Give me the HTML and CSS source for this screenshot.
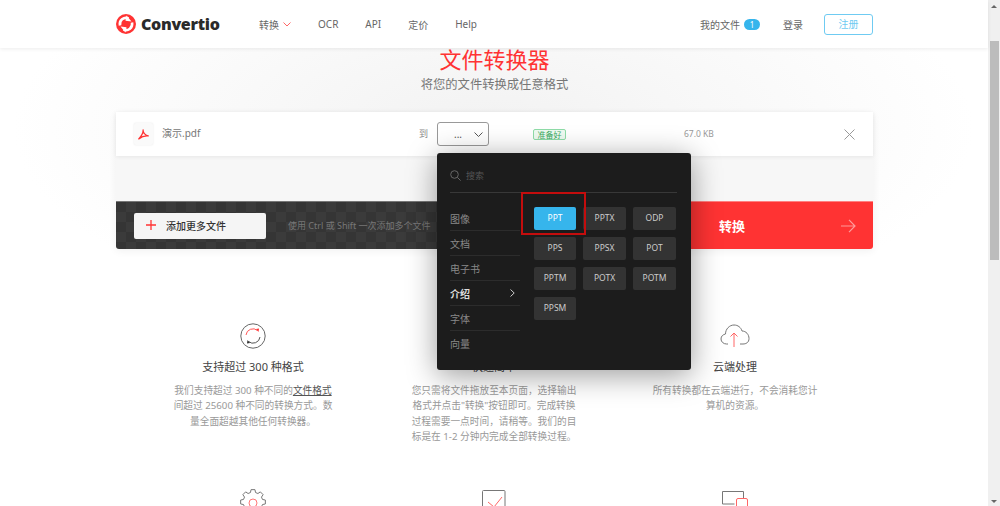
FILE: index.html
```html
<!DOCTYPE html>
<html lang="zh-CN">
 <head>
  <meta charset="UTF-8">
  <title>Convertio</title>
  <link rel="stylesheet" href="styles.css">
 </head>
 <body>
  <div class="app">
   <div class="main">
    <header class="topbar">
     <a class="logo">
      <svg class="logo-mark" width="20" height="20" viewBox="0 0 20 20">
       <circle cx="10" cy="10" r="10" fill="#f33"/>
       <path d="M4 11.500 A6.200 6.200 0 0 1 12.500 4.400" fill="none" stroke="#fff" stroke-width="2.600"/>
       <path d="M16 8.500 A6.200 6.200 0 0 1 7.500 15.600" fill="none" stroke="#fff" stroke-width="2.600"/>
       <path d="M9.500 6.800 L10.500 1.500 L15.500 7.500 Z" fill="#fff"/>
       <path d="M10.500 13.200 L9.500 18.500 L4.500 12.500 Z" fill="#fff"/>
      </svg>
      Convertio
     </a>
     <nav class="nav">
      <a class="nav-item">转换
       <svg width="8" height="5" viewBox="0 0 8 5"><path d="M.5.5 4 4 7.500.5" fill="none" stroke="#f66"/></svg>
      </a>
      <a class="nav-item">OCR</a>
      <a class="nav-item">API</a>
      <a class="nav-item">定价</a>
      <a class="nav-item">Help</a>
     </nav>
     <div class="account">
      <a class="nav-item">我的文件 <span class="badge">1</span></a>
      <a class="nav-item login">登录</a>
      <a class="signup">注册</a>
     </div>
    </header>

    <section class="hero">
     <h1>文件转换器</h1>
     <p class="subtitle">将您的文件转换成任意格式</p>

     <div class="converter">
      <div class="file-row">
       <span class="file-icon">
        <svg width="11" height="11" viewBox="0 0 12 12"><path d="M5.600 1C5.800 4.500 3.600 8 .8 10.800 3.600 8.600 8 7.200 11.200 7.600 8.600 7 5.200 4.400 5.600 1Z" fill="none" stroke="#f33" stroke-width="1.400" stroke-linejoin="round"/></svg>
       </span>
       <span class="file-name">演示.pdf</span>
       <span class="to-label">到</span>
       <span class="select">...
        <svg width="9" height="5" viewBox="0 0 9 5"><path d="M.5.5 4.500 4.500 8.500.5" fill="none" stroke="#555"/></svg>
       </span>
       <span class="status">准备好</span>
       <span class="file-size">67.0 KB</span>
       <svg class="close" width="11" height="11" viewBox="0 0 11 11"><path d="M.5.5 10.500 10.500M10.500.5.5 10.500" stroke="#999"/></svg>
      </div>
      <div class="gap-row"></div>
      <div class="action-row">
       <div class="action-left">
        <a class="add-btn">
         <svg width="10" height="10" viewBox="0 0 10 10"><path d="M5 0V10M0 5H10" stroke="#f33" stroke-width="1.300"/></svg>
         添加更多文件
        </a>
        <span class="hint">使用 Ctrl 或 Shift 一次添加多个文件</span>
       </div>
       <a class="convert-btn">
        <span>转换</span>
        <svg width="15" height="14" viewBox="0 0 15 14"><path d="M0 7H14M8 .8 14 7 8 13.200" fill="none" stroke="#ff9a9a" stroke-width="1.200"/></svg>
       </a>
      </div>

      <div class="dropdown">
       <div class="search">
        <svg width="11" height="11" viewBox="0 0 11 11"><circle cx="4.500" cy="4.500" r="3.800" fill="none" stroke="#666"/><path d="M7.300 7.300 10.600 10.600" stroke="#666"/></svg>
        <span>搜索</span>
       </div>
       <div class="dropdown-body">
        <ul class="cats">
         <li>图像</li>
         <li>文档</li>
         <li>电子书</li>
         <li class="active">介绍
          <svg width="5" height="8" viewBox="0 0 5 8"><path d="M.5.5 4.200 4 .5 7.500" fill="none" stroke="#ccc"/></svg>
         </li>
         <li>字体</li>
         <li>向量</li>
        </ul>
        <div class="formats">
         <a class="fmt selected">PPT</a>
         <a class="fmt">PPTX</a>
         <a class="fmt">ODP</a>
         <a class="fmt">PPS</a>
         <a class="fmt">PPSX</a>
         <a class="fmt">POT</a>
         <a class="fmt">PPTM</a>
         <a class="fmt">POTX</a>
         <a class="fmt">POTM</a>
         <a class="fmt">PPSM</a>
        </div>
       </div>
       <div class="callout"></div>
      </div>
     </div>
    </section>

    <section class="features">
     <div class="feature">
      <svg class="feature-icon" width="26" height="26" viewBox="0 0 26 26">
       <circle cx="13" cy="13" r="12.200" fill="none" stroke="#666"/>
       <path d="M6 12A7 7 0 0 1 17.500 7.500" fill="none" stroke="#f55"/>
       <path d="M20 14A7 7 0 0 1 8.500 18.500" fill="none" stroke="#555"/>
       <path d="M16 6 19 5.500 18.500 9Z" fill="#f33"/>
       <path d="M10 20 7 20.500 7.500 17Z" fill="#333"/>
      </svg>
      <h3>支持超过 300 种格式</h3>
      <p>我们支持超过 300 种不同的<u>文件格式</u><br>间超过 25600 种不同的转换方式。数<br>量全面超越其他任何转换器。</p>
     </div>
     <div class="feature">
      <svg class="feature-icon" width="26" height="26" viewBox="0 0 26 26">
       <path d="M13 4V22M4 13H22" stroke="#888"/>
      </svg>
      <h3>快速简单</h3>
      <p>您只需将文件拖放至本页面，选择输出<br>格式并点击"转换"按钮即可。完成转换<br>过程需要一点时间，请稍等。我们的目<br>标是在 1-2 分钟内完成全部转换过程。</p>
     </div>
     <div class="feature">
      <svg class="feature-icon" width="30" height="26" viewBox="0 0 30 26">
       <path d="M8 21H6.500C3.500 21 1 18.800 1 16S3 11.500 5.500 11C5.500 6 9.500 2 14 2 18 2 21 4.500 22 8 26 8 29 11.500 29 15.500S26 21 23 21H20" fill="none" stroke="#777"/>
       <path d="M14 24V10M10.500 13.500 14 10 17.500 13.500" fill="none" stroke="#f66"/>
      </svg>
      <h3>云端处理</h3>
      <p>所有转换都在云端进行，不会消耗您计<br>算机的资源。</p>
     </div>
     <div class="feature">
      <svg class="feature-icon" width="26" height="26" viewBox="0 0 26 26">
       <path d="M10.460 3.530 11.040.65H14.960L15.540 3.530 17.900 4.510 20.350 2.890 23.110 5.650 21.490 8.100 22.470 10.460 25.350 11.040V14.960L22.470 15.540 21.490 17.900 23.110 20.350 20.350 23.110 17.900 21.490 15.540 22.470 14.960 25.350H11.040L10.460 22.470 8.100 21.490 5.650 23.110 2.890 20.350 4.510 17.900 3.530 15.540.65 14.960V11.040L3.530 10.460 4.510 8.100 2.890 5.650 5.650 2.890 8.100 4.510Z" fill="none" stroke="#777" stroke-linejoin="round"/>
       <circle cx="13" cy="14" r="4" fill="none" stroke="#f77"/>
      </svg>
     </div>
     <div class="feature">
      <svg class="feature-icon" width="24" height="26" viewBox="0 0 24 26">
       <path d="M.5 24V2.500Q.5 1.500 1.500 1.500H22Q23 1.500 23 2.500V24" fill="none" stroke="#777"/>
       <path d="M6 13 12 18 20 8" fill="none" stroke="#f66"/>
      </svg>
     </div>
     <div class="feature">
      <svg class="feature-icon" width="26" height="26" viewBox="0 0 26 26">
       <path d="M12.500 15H.5V2.500H21.500V9" fill="none" stroke="#777"/>
       <path d="M.5 18H12.500" stroke="#777"/>
       <path d="M14.500 26V11Q14.500 9.500 16 9.500H24Q25.500 9.500 25.500 11V26" fill="none" stroke="#f66"/>
      </svg>
     </div>
    </section>
   </div>
   <div class="scrollbar">
    <span class="arrow-up"></span>
    <span class="thumb"></span>
    <span class="arrow-down"></span>
   </div>
  </div>
 </body>
</html>
```

FILE: styles.css
```css
* {
  box-sizing: border-box;
}
body {
  margin: 0;
  font-family: "Noto Sans", "Noto Sans CJK SC", sans-serif;
  color: #555;
  background: #fff;
}
a {
  text-decoration: none;
  color: inherit;
}
.app {
  display: flex;
  height: 506px;
  overflow: hidden;
}
.main {
  flex: 1;
  min-width: 0;
}

/* top bar */
.topbar {
  position: relative;
  z-index: 5;
  display: flex;
  align-items: center;
  height: 48px;
  padding: 0 115px 0 116px;
  background: #fff;
  box-shadow: 0 1px 4px rgba(0,0,0,0.08);
}
.logo {
  display: flex;
  align-items: center;
  gap: 5px;
  width: 143px;
  font-family: "Open Sans", sans-serif;
  font-weight: 800;
  font-size: 16px;
  letter-spacing: -0.3px;
  color: #2a2a2a;
}
.nav {
  display: flex;
  align-items: center;
  gap: 27px;
}
.nav-item {
  display: flex;
  align-items: center;
  gap: 4px;
  font-size: 10px;
  color: #666;
}
.account {
  display: flex;
  align-items: center;
  margin-left: auto;
}
.badge {
  width: 16px;
  height: 11px;
  border-radius: 6px;
  background: #36b5ec;
  color: #fff;
  font-size: 8px;
  line-height: 11px;
  text-align: center;
}
.login {
  margin-left: 23px;
}
.signup {
  width: 49px;
  height: 21px;
  margin-left: 21px;
  border: 1px solid #6fcbf2;
  border-radius: 3px;
  color: #6fcbf2;
  font-size: 10px;
  line-height: 19px;
  text-align: center;
}

/* hero + converter */
.hero {
  padding: 0 115px 0 116px;
  text-align: center;
  background: radial-gradient(ellipse 480px 200px at 50% 40%, #f2f2f2, #fff);
}
.hero h1 {
  margin: 0;
  font-size: 22px;
  font-weight: 400;
  line-height: 22px;
  color: #f33;
}
.subtitle {
  margin: 6px 0 18px;
  font-size: 12.300px;
  line-height: 18px;
  color: #777;
}
.converter {
  position: relative;
  text-align: left;
  box-shadow: 0 2px 8px rgba(0,0,0,0.06);
}
.file-row {
  display: flex;
  align-items: center;
  height: 44px;
  padding: 0 18px;
  background: #fff;
  box-shadow: 0 1px 4px rgba(0,0,0,0.07);
  position: relative;
}
.file-icon {
  display: flex;
  align-items: center;
  justify-content: center;
  width: 19px;
  height: 22px;
  border-radius: 2px;
  background: #fafafa;
  box-shadow: 0 0 2px rgba(0,0,0,0.1);
}
.file-name {
  flex: 1;
  margin: 0 0 3px 9px;
  font-size: 10px;
  color: #777;
}
.to-label {
  margin: 0 9px 1px 0;
  font-size: 9px;
  color: #888;
}
.select {
  display: flex;
  align-items: center;
  justify-content: space-between;
  width: 52px;
  height: 24px;
  padding: 0 5px 0 16px;
  border: 1px solid #999;
  border-radius: 3px;
  font-size: 10px;
  color: #555;
}
.status {
  width: 33px;
  height: 11px;
  margin-left: 44px;
  border: 1px solid #8fdca8;
  border-radius: 2px;
  background: #eefaf1;
  color: #3aaa5f;
  font-size: 8px;
  line-height: 9px;
  text-align: center;
}
.file-size {
  width: 160px;
  margin: 0 0 1px 118px;
  font-size: 8.500px;
  color: #999;
}
.close {
  flex: none;
}
.gap-row {
  height: 45px;
  background: #f7f7f7;
}
.action-row {
  display: flex;
  height: 48px;
  border-radius: 0 0 3px 3px;
  overflow: hidden;
}
.action-left {
  display: flex;
  align-items: center;
  flex: 1;
  padding-left: 18px;
  border-top: 1px solid #777;
  background-color: #353535;
  background-image: conic-gradient(#3b3b3b 25%, transparent 0 50%, #3b3b3b 0 75%, transparent 0);
  background-size: 20px 20px;
}
.add-btn {
  display: flex;
  align-items: center;
  gap: 10px;
  width: 132px;
  height: 26px;
  padding: 0 0 1px 12px;
  border-radius: 2px;
  background: #f5f5f5;
  color: #333;
  font-size: 10px;
  font-weight: 500;
}
.hint {
  margin: 0 0 1px 22px;
  font-size: 9px;
  color: #777;
}
.convert-btn {
  display: flex;
  align-items: center;
  justify-content: space-between;
  width: 273px;
  padding: 0 17px 0 119px;
  border-top: 1px solid #ff8080;
  background: #f33;
  color: #fff;
  font-size: 13px;
  font-weight: 700;
}

/* format picker */
.dropdown {
  position: absolute;
  top: 41px;
  left: 321px;
  z-index: 3;
  width: 254px;
  height: 217px;
  padding: 0 14px 0 13px;
  border-radius: 3px;
  background: #1c1c1c;
  box-shadow: 0 5px 30px rgba(0,0,0,0.4);
}
.search {
  display: flex;
  align-items: center;
  gap: 5px;
  height: 40px;
  padding-top: 5px;
  border-bottom: 1px solid #383838;
  font-size: 9px;
  color: #555;
}
.dropdown-body {
  display: flex;
}
.cats {
  width: 70px;
  margin: 13px 0 0;
  padding: 0;
  list-style: none;
  font-size: 10px;
  color: #888;
}
.cats li {
  display: flex;
  align-items: center;
  justify-content: space-between;
  height: 25px;
  padding-right: 5px;
  border-bottom: 1px solid #2c2c2c;
}
.cats li:last-child {
  border-bottom: 0;
}
.cats .active {
  color: #ddd;
  font-weight: 700;
}
.formats {
  display: grid;
  grid-template-columns: 42px 43px 43px;
  grid-auto-rows: 23px;
  column-gap: 7px;
  row-gap: 7px;
  margin: 14px 0 0 14px;
}
.fmt {
  border-radius: 2px;
  background: #333;
  color: #ccc;
  font-size: 8.500px;
  line-height: 22px;
  text-align: center;
}
.fmt.selected {
  background: #36b5ec;
  color: #fff;
}
.callout {
  position: absolute;
  top: 39px;
  left: 84px;
  width: 65px;
  height: 43px;
  border: 2px solid #c40d0d;
}

/* features */
.features {
  display: grid;
  grid-template-columns: repeat(3, 241px);
  justify-content: center;
  row-gap: 45px;
  padding-top: 74px;
  text-align: center;
}
.feature-icon {
  display: block;
  margin: 0 auto;
}
.feature h3 {
  margin: 10px 0 8px;
  font-size: 11px;
  font-weight: 400;
  line-height: 16px;
  color: #444;
}
.feature p {
  margin: 0;
  font-size: 9.700px;
  line-height: 15.300px;
  color: #999;
}
.feature u {
  color: #555;
}

/* fake scrollbar from the capture */
.scrollbar {
  display: flex;
  flex-direction: column;
  align-items: center;
  flex: none;
  width: 12px;
  padding: 5px 0 3px;
  background: #f0f0f0;
}
.arrow-up,
.arrow-down {
  width: 0;
  height: 0;
  border-left: 3px solid transparent;
  border-right: 3px solid transparent;
}
.arrow-up {
  border-bottom: 3px solid #666;
}
.arrow-down {
  margin-top: auto;
  border-top: 3px solid #666;
}
.thumb {
  width: 9px;
  height: 219px;
  margin-top: 33px;
  background: #bcbcbc;
}
```
